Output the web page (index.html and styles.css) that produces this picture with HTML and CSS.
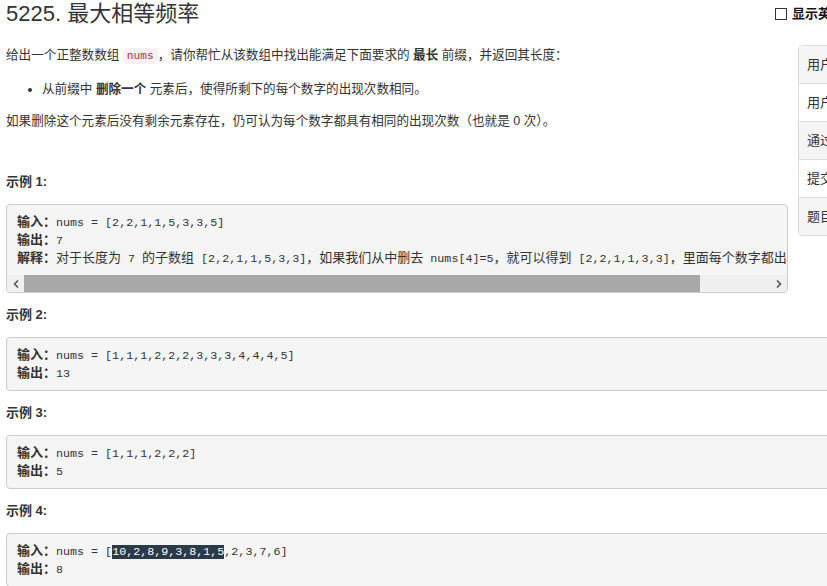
FILE: index.html
```html
<!DOCTYPE html>
<html lang="zh-CN">
<head>
    <meta charset="UTF-8">
    <meta name="viewport" content="width=device-width, initial-scale=1.0">
    <title>5225. 最大相等频率</title>
    <link rel="stylesheet" href="styles.css">
</head>
<body>
    <div class="page">
        <header class="question-header">
            <h1 class="question-title">5225. 最大相等频率</h1>
            <label class="lang-toggle"><span class="checkbox"></span>显示英文描述</label>
        </header>

        <div class="question-content">
            <ul class="stats">
                <li><span>用户通过次数</span><span class="stats-value">178</span></li>
                <li><span>用户尝试次数</span><span class="stats-value">535</span></li>
                <li><span>通过次数</span><span class="stats-value">183</span></li>
                <li><span>提交次数</span><span class="stats-value">1606</span></li>
                <li><span>题目难度</span><span class="stats-value">Hard</span></li>
            </ul>

            <p>给出一个正整数数组 <code>nums</code>，请你帮忙从该数组中找出能满足下面要求的 <strong>最长</strong> 前缀，并返回其长度：</p>
            <ul class="rules">
                <li>从前缀中 <strong>删除一个</strong> 元素后，使得所剩下的每个数字的出现次数相同。</li>
            </ul>
            <p>如果删除这个元素后没有剩余元素存在，仍可认为每个数字都具有相同的出现次数（也就是 0 次）。</p>

            <div class="examples">
                <p class="example-title">示例 1:</p>
                <div class="example">
<pre><strong>输入：</strong>nums = [2,2,1,1,5,3,3,5]
<strong>输出：</strong>7
<strong>解释：</strong><span class="zh">对于长度为</span> 7 <span class="zh">的子数组</span> [2,2,1,1,5,3,3]<span class="zh">，如果我们从中删去</span> nums[4]=5<span class="zh">，就可以得到</span> [2,2,1,1,3,3]<span class="zh">，里面每个数字都出现了两次。</span></pre>
                    <div class="hscroll">
                        <span class="hscroll-btn">
                            <svg width="6" height="8" viewBox="0 0 6 8"><path d="M5 0.5 L1.5 4 L5 7.5" fill="none" stroke="#555" stroke-width="1.6"/></svg>
                        </span>
                        <div class="hscroll-track">
                            <div class="hscroll-thumb" style="width: 90.6%"></div>
                        </div>
                        <span class="hscroll-btn">
                            <svg width="6" height="8" viewBox="0 0 6 8"><path d="M1 0.5 L4.5 4 L1 7.5" fill="none" stroke="#555" stroke-width="1.6"/></svg>
                        </span>
                    </div>
                </div>

                <p class="example-title">示例 2:</p>
                <div class="example">
<pre><strong>输入：</strong>nums = [1,1,1,2,2,2,3,3,3,4,4,4,5]
<strong>输出：</strong>13</pre>
                </div>

                <p class="example-title">示例 3:</p>
                <div class="example">
<pre><strong>输入：</strong>nums = [1,1,1,2,2,2]
<strong>输出：</strong>5</pre>
                </div>

                <p class="example-title">示例 4:</p>
                <div class="example">
<pre><strong>输入：</strong>nums = [<span class="selected">10,2,8,9,3,8,1,5</span>,2,3,7,6]
<strong>输出：</strong>8</pre>
                </div>
            </div>
        </div>
    </div>
</body>
</html>
```

FILE: styles.css
```css
html,
body {
    overflow: hidden;
}

body {
    margin: 0;
    font-family: "Liberation Sans", "Noto Sans CJK SC", sans-serif;
    font-size: 12.6px;
    line-height: 20px;
    color: #333;
    background: #fff;
}

.page {
    width: 1000px;
    padding: 0 6px;
}

/* Заголовок */
.question-header {
    display: grid;
    grid-template-columns: 769px auto;
    align-items: start;
    height: 28px;
    margin-bottom: 17px;
}

.question-title {
    margin: 0;
    font-size: 22px;
    font-weight: normal;
    line-height: 28px;
}

.lang-toggle {
    display: flex;
    align-items: center;
    gap: 5px;
    margin-top: 4px;
    font-size: 13px;
    font-weight: bold;
    color: #111;
    white-space: nowrap;
}

.checkbox {
    width: 10px;
    height: 10px;
    border: 1px solid #333;
    background: #fff;
}

/* Описание */
.question-content p {
    margin: 0 0 13px;
}

.question-content code {
    font-family: "Liberation Mono", monospace;
    font-size: 11.2px;
    color: #c7254e;
    background: #f9f2f4;
    padding: 2px 4px;
    border-radius: 4px;
}

.rules {
    margin: 0 0 12px;
    padding-left: 36px;
}

.stats {
    float: right;
    width: 206px;
    margin: 0 0 10px 10px;
    padding: 0;
    list-style: none;
    border: 1px solid #ddd;
    border-radius: 4px;
    overflow: hidden;
    font-size: 13px;
}

.stats li {
    display: flex;
    justify-content: space-between;
    padding: 9px 8px;
    line-height: 19px;
}

.stats li + li {
    border-top: 1px solid #ddd;
}

.stats li:nth-child(odd) {
    background: #f5f5f5;
}

/* Примеры */
.examples {
    margin-top: 41px;
}

.question-content .example-title {
    margin: 0 0 12px;
    font-size: 13px;
    font-weight: bold;
}

.example {
    margin-bottom: 12px;
    border: 1px solid #ccc;
    border-radius: 4px;
    background: #f5f5f5;
    overflow: hidden;
}

.example pre {
    margin: 0;
    padding: 9px 10px 7px;
    font-family: "Liberation Mono", "Noto Sans CJK SC", monospace;
    font-size: 11.7px;
    line-height: 18px;
    color: #333;
    white-space: pre;
    overflow: hidden;
}

.example pre strong {
    font-family: "Liberation Sans", "Noto Sans CJK SC", sans-serif;
    font-size: 13px;
    line-height: 1;
}

.example pre .zh {
    font-family: "Noto Sans CJK SC", sans-serif;
    font-size: 13px;
    line-height: 1;
}

.selected {
    background: #2b3a4a;
    color: #fff;
}

.hscroll {
    display: flex;
    height: 17px;
    background: #f0f0f0;
}

.hscroll-btn {
    display: flex;
    align-items: center;
    justify-content: center;
    width: 17px;
}

.hscroll-track {
    flex: 1;
}

.hscroll-thumb {
    height: 100%;
    background: #a8a8a8;
}
```
